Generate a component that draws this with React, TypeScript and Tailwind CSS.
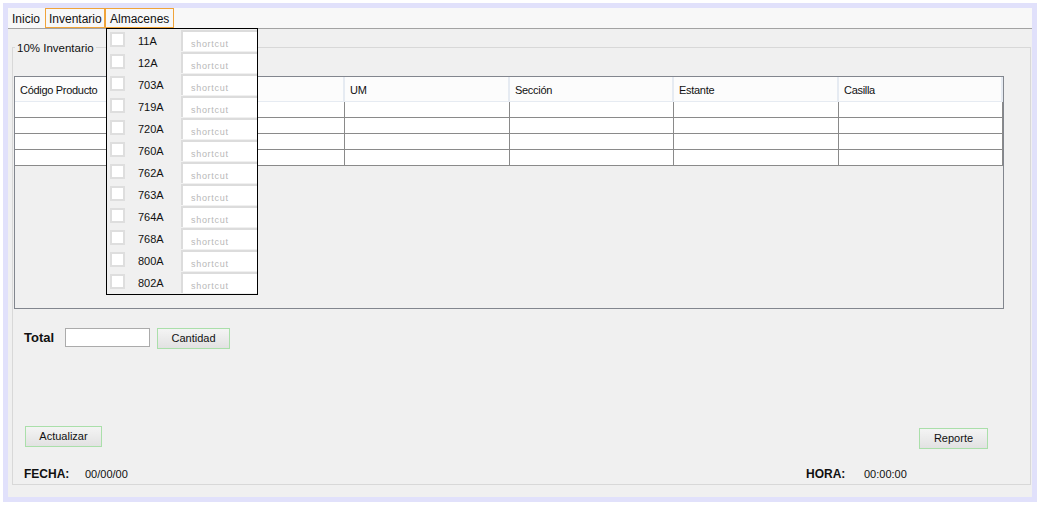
import React from "react";

const almacenes = ["11A", "12A", "703A", "719A", "720A", "760A", "762A", "763A", "764A", "768A", "800A", "802A"];
const columns = ["Código Producto", "", "UM", "Sección", "Estante", "Casilla"];

const WinButton = ({ label, className }: { label: string; className?: string }) => (
  <button
    type="button"
    className={
      "h-[21px] border border-[#aadfaa] bg-linear-to-b from-[#f4f4f4] to-[#e2e2e2] text-[11px] leading-[19px] text-[#111] " +
      (className ?? "")
    }
  >
    {label}
  </button>
);

const AlmacenesMenu = () => (
  <div className="absolute left-[98px] top-[20px] z-10 flex w-[152px] flex-col border border-black bg-[#f0f0f0] pt-[1px]">
    {almacenes.map((code) => (
      <div key={code} className="flex h-[22px] items-start">
        <div className="ml-[3px] mt-[2px] h-[15px] w-[15px] flex-none border-2 border-[#dedede] bg-white" />
        <div className="ml-[13px] flex h-[22px] w-[43px] flex-none items-center text-[11px] text-[#111]">{code}</div>
        <div className="flex h-[21px] flex-1 items-end border-l-2 border-t-2 border-[#dcdcdc] bg-white pb-[1px] pl-[8px] text-[9px] leading-[12px] tracking-[0.7px] text-[#b8b8b8]">
          shortcut
        </div>
      </div>
    ))}
  </div>
);

const ProductTable = () => (
  <div className="ml-[1px] mt-[28px] flex h-[233px] w-[990px] flex-none flex-col border border-[#82868e] bg-[#f0f0f0]">
    <div className="grid h-[25px] grid-cols-[165px_165px_165px_164px_165px_164px] bg-[#fcfcfc]">
      {columns.map((col, i) => (
        <div
          key={i}
          className="flex items-center border-b border-r-2 border-[#e6ebf2] pl-[5px] pt-[2px] text-[11px] tracking-[-0.3px] text-[#111]"
        >
          {col}
        </div>
      ))}
    </div>
    {[0, 1, 2, 3].map((row) => (
      <div key={row} className="grid h-[16px] grid-cols-[165px_165px_165px_164px_165px_164px] bg-white">
        {columns.map((_, i) => (
          <div key={i} className="border-b border-r border-[#8a8a8a]" />
        ))}
      </div>
    ))}
  </div>
);

export default function App() {
  return (
    <div className="h-[505px] w-[1043px] bg-white pl-[3px] pt-[3px] font-['Liberation_Sans',Arial,sans-serif]">
      <div className="relative flex h-[499px] w-[1034px] flex-col border-[5px] border-[#e1e1fb] bg-[#f0f0f0]">
        <div className="flex h-[21px] flex-none items-stretch border-b border-[#a3a3a3] bg-[#f8f8f8] text-[12px] text-[#111]">
          <div className="flex w-[37px] items-center pl-[4px] pt-[1px]">Inicio</div>
          <div className="flex w-[60px] items-center border border-[#f0a43a] pl-[3px] pt-[1px]">Inventario</div>
          <div className="flex w-[69px] items-center border border-[#f0a43a] pl-[4px] pt-[1px]">Almacenes</div>
        </div>

        <AlmacenesMenu />

        <div className="relative mb-[12px] ml-[4px] mr-[1px] mt-[18px] flex flex-1 flex-col border border-[#d8d8d8]">
          <span className="absolute left-[2px] top-[-7px] bg-[#f0f0f0] px-[2px] text-[11.5px] leading-[14px] text-[#111]">
            10% Inventario
          </span>

          <ProductTable />

          <div className="ml-[11px] mt-[19px] flex items-start">
            <span className="w-[41px] text-[13px] font-bold leading-[19px] text-[#111]">Total</span>
            <div className="h-[19px] w-[85px] border border-[#ababab] bg-white" />
            <WinButton label="Cantidad" className="ml-[7px] w-[73px]" />
          </div>

          <div className="flex-1" />

          <div className="flex items-start justify-between">
            <WinButton label="Actualizar" className="ml-[12px] w-[77px]" />
            <WinButton label="Reporte" className="mr-[42px] mt-[2px] w-[69px]" />
          </div>

          <div className="mb-[3px] ml-[11px] mt-[18px] flex items-center leading-[14px] text-[#111]">
            <div className="flex w-[782px] items-center">
              <span className="w-[61px] text-[12px] font-bold">FECHA:</span>
              <span className="text-[11px]">00/00/00</span>
            </div>
            <span className="w-[58px] text-[12px] font-bold">HORA:</span>
            <span className="text-[11px]">00:00:00</span>
          </div>
        </div>
      </div>
    </div>
  );
}
